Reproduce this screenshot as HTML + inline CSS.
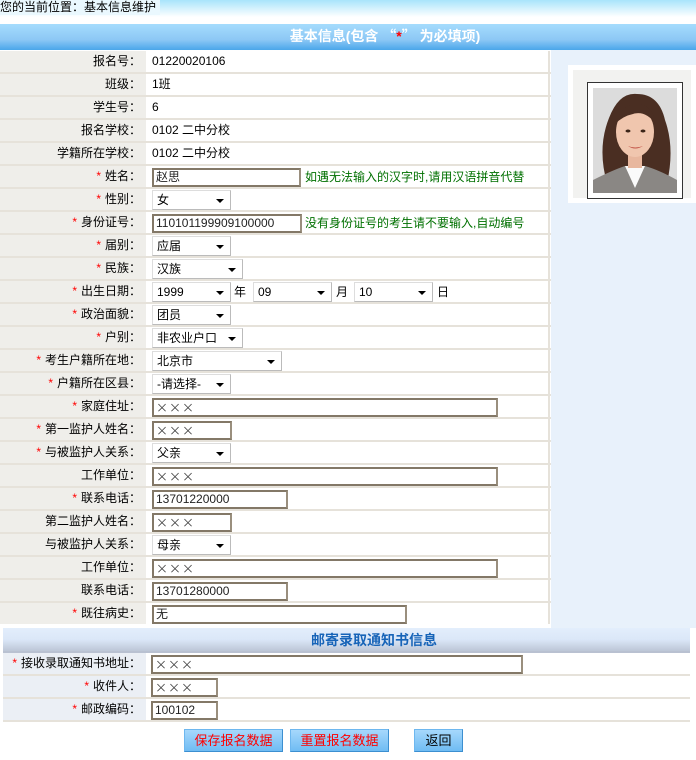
<!DOCTYPE html>
<html><head><meta charset="utf-8"><style>
*{margin:0;padding:0;box-sizing:border-box}
body{width:696px;height:760px;background:#fff;font-family:"Liberation Sans","Noto Sans CJK SC","WenQuanYi Zen Hei",sans-serif;font-size:12px;color:#000;position:relative;overflow:hidden}
.top{position:absolute;left:0;top:0;width:696px;height:17px;background:linear-gradient(#a8e4fb,#ffffff)}
.top span{position:absolute;left:0;top:0;height:15px;width:160px;background:#eaf8fe;line-height:14px;font-size:12px}
.h1{position:absolute;left:0;top:24px;width:696px;height:26px;background:linear-gradient(#a5dcfd,#8dc8f5 60%,#4aa6ea);color:#fff;font-weight:bold;font-size:14px;line-height:24px;text-align:center;padding-left:74px}
.h1 b{color:#f00}
.q{font-family:"Noto Sans CJK SC",sans-serif}
.right{position:absolute;left:551px;top:50px;width:145px;height:578px;background:#e8f1fb}
.photo{position:absolute;left:568px;top:65px;width:128px;height:138px;background:#fff;padding:5px}
.photo div.in{width:100%;height:100%;background:#f2f2f0;position:relative}
.frame{position:absolute;left:14px;top:12px;width:96px;height:117px;border:1px solid #333;background:#fff}
.pic{position:absolute;left:5px;top:5px;width:84px;height:105px;background:#e0e0e0;overflow:hidden}
.row{position:absolute;left:0;width:551px;height:23px;border-bottom:2px solid #e6e2da}
.lab{position:absolute;left:0;top:0;width:146px;height:21px;background:#efeeea;text-align:right;padding-right:5px;line-height:21px}
.val{position:absolute;left:147px;top:0;width:403px;height:21px;background:#fff;border-right:2px solid #e6e2da;line-height:21px;padding-left:5px}
.s{color:#f00;margin-right:4px}
.inp{position:absolute;top:2px;height:19px;border:2px solid #837867;border-right-color:#9a8f7e;background:#fff;line-height:15px;padding-left:2px;color:#222;font-size:12px}
.x{font-family:"Noto Sans CJK SC",sans-serif;color:#444;letter-spacing:1px}
.sel{position:absolute;top:1px;height:20px;background:#fff;border:1px solid #ddd;border-right-color:#bbb;border-bottom-color:#bbb;line-height:18px;padding-left:4px}
.sel:after{content:"";position:absolute;right:6px;top:8px;border-left:4px solid transparent;border-right:4px solid transparent;border-top:4px solid #000}
.t{position:absolute;top:0;line-height:23px}
.g{color:#007000}
.h2{position:absolute;left:3px;top:628px;width:687px;height:25px;background:linear-gradient(#e3eefc,#dbe7f8 50%,#bcc6d6);border-bottom:2px solid #b9c1d1;color:#1764b8;font-weight:bold;font-size:14px;text-align:center;line-height:24px;padding-left:55px}
.row2{position:absolute;left:3px;width:687px;height:23px;border-bottom:2px solid #e6e2da}
.row2 .lab{width:143px;background:#ebeff5}
.row2 .val{left:144px;width:543px;border-right:none}
.btn{position:absolute;top:729px;height:23px;background:linear-gradient(#a6d8fc,#6fbcf3);border:1px solid #6db7ef;border-right-color:#3c8fd0;border-bottom-color:#3c8fd0;color:#f00;text-align:center;line-height:21px;font-size:13px}
</style></head><body>
<div class="top"><span>您的当前位置：基本信息维护</span></div>
<div class="h1">基本信息(包含 <span class="q">“</span><b>*</b><span class="q">”</span> 为必填项)</div>
<div class="right"></div>
<div class="photo"><div class="in"><div class="frame"><div class="pic">
<svg width="84" height="105" viewBox="0 0 84 105"><rect width="84" height="105" fill="#dcdcdc"/>
<path d="M14 95 Q4 60 16 30 Q26 4 44 6 Q66 6 72 32 Q82 60 74 95Z" fill="#4a2e22"/>
<path d="M0 105 L0 92 Q20 82 32 78 L52 78 Q66 82 84 92 L84 105Z" fill="#8a8784"/>
<path d="M32 78 L42 100 L52 78Z" fill="#fafafa"/>
<rect x="35" y="62" width="14" height="18" fill="#e8b79e"/>
<ellipse cx="42" cy="44" rx="19" ry="25" fill="#f0c6ae"/>
<path d="M22 36 Q30 14 46 16 Q60 18 63 36 Q52 22 40 26 Q30 28 22 36Z" fill="#4a2e22"/>
<ellipse cx="35" cy="43" rx="2.5" ry="1.5" fill="#3a2418"/><ellipse cx="50" cy="43" rx="2.5" ry="1.5" fill="#3a2418"/>
<path d="M35 58 Q42 63 50 58 Q42 61 35 58Z" fill="#c4574a"/></svg>
</div></div></div></div>

<div class="row" style="top:51px"><div class="lab">报名号：</div><div class="val">01220020106</div></div>
<div class="row" style="top:74px"><div class="lab">班级：</div><div class="val">1班</div></div>
<div class="row" style="top:97px"><div class="lab">学生号：</div><div class="val">6</div></div>
<div class="row" style="top:120px"><div class="lab">报名学校：</div><div class="val">0102 二中分校</div></div>
<div class="row" style="top:143px"><div class="lab">学籍所在学校：</div><div class="val">0102 二中分校</div></div>
<div class="row" style="top:166px"><div class="lab"><span class="s">*</span>姓名：</div><div class="val"><div class="inp" style="left:5px;width:149px">赵思</div><span class="t g" style="left:158px">如遇无法输入的汉字时,请用汉语拼音代替</span></div></div>
<div class="row" style="top:189px"><div class="lab"><span class="s">*</span>性别：</div><div class="val"><div class="sel" style="left:5px;width:79px">女</div></div></div>
<div class="row" style="top:212px"><div class="lab"><span class="s">*</span>身份证号：</div><div class="val"><div class="inp" style="left:5px;width:150px">110101199909100000</div><span class="t g" style="left:158px">没有身份证号的考生请不要输入,自动编号</span></div></div>
<div class="row" style="top:235px"><div class="lab"><span class="s">*</span>届别：</div><div class="val"><div class="sel" style="left:5px;width:79px">应届</div></div></div>
<div class="row" style="top:258px"><div class="lab"><span class="s">*</span>民族：</div><div class="val"><div class="sel" style="left:5px;width:91px">汉族</div></div></div>
<div class="row" style="top:281px"><div class="lab"><span class="s">*</span>出生日期：</div><div class="val"><div class="sel" style="left:5px;width:79px">1999</div><span class="t" style="left:87px">年</span><div class="sel" style="left:106px;width:79px">09</div><span class="t" style="left:189px">月</span><div class="sel" style="left:207px;width:79px">10</div><span class="t" style="left:290px">日</span></div></div>
<div class="row" style="top:304px"><div class="lab"><span class="s">*</span>政治面貌：</div><div class="val"><div class="sel" style="left:5px;width:79px">团员</div></div></div>
<div class="row" style="top:327px"><div class="lab"><span class="s">*</span>户别：</div><div class="val"><div class="sel" style="left:5px;width:91px">非农业户口</div></div></div>
<div class="row" style="top:350px"><div class="lab"><span class="s">*</span>考生户籍所在地：</div><div class="val"><div class="sel" style="left:5px;width:130px">北京市</div></div></div>
<div class="row" style="top:373px"><div class="lab"><span class="s">*</span>户籍所在区县：</div><div class="val"><div class="sel" style="left:5px;width:79px">-请选择-</div></div></div>
<div class="row" style="top:396px"><div class="lab"><span class="s">*</span>家庭住址：</div><div class="val"><div class="inp x" style="left:5px;width:346px">×××</div></div></div>
<div class="row" style="top:419px"><div class="lab"><span class="s">*</span>第一监护人姓名：</div><div class="val"><div class="inp x" style="left:5px;width:80px">×××</div></div></div>
<div class="row" style="top:442px"><div class="lab"><span class="s">*</span>与被监护人关系：</div><div class="val"><div class="sel" style="left:5px;width:79px">父亲</div></div></div>
<div class="row" style="top:465px"><div class="lab">工作单位：</div><div class="val"><div class="inp x" style="left:5px;width:346px">×××</div></div></div>
<div class="row" style="top:488px"><div class="lab"><span class="s">*</span>联系电话：</div><div class="val"><div class="inp" style="left:5px;width:136px">13701220000</div></div></div>
<div class="row" style="top:511px"><div class="lab">第二监护人姓名：</div><div class="val"><div class="inp x" style="left:5px;width:80px">×××</div></div></div>
<div class="row" style="top:534px"><div class="lab">与被监护人关系：</div><div class="val"><div class="sel" style="left:5px;width:79px">母亲</div></div></div>
<div class="row" style="top:557px"><div class="lab">工作单位：</div><div class="val"><div class="inp x" style="left:5px;width:346px">×××</div></div></div>
<div class="row" style="top:580px"><div class="lab">联系电话：</div><div class="val"><div class="inp" style="left:5px;width:136px">13701280000</div></div></div>
<div class="row" style="top:603px;border-bottom:none"><div class="lab"><span class="s">*</span>既往病史：</div><div class="val"><div class="inp" style="left:5px;width:255px">无</div></div></div>

<div class="h2">邮寄录取通知书信息</div>
<div class="row2" style="top:653px"><div class="lab"><span class="s">*</span>接收录取通知书地址：</div><div class="val"><div class="inp x" style="left:4px;width:372px">×××</div></div></div>
<div class="row2" style="top:676px"><div class="lab"><span class="s">*</span>收件人：</div><div class="val"><div class="inp x" style="left:4px;width:67px">×××</div></div></div>
<div class="row2" style="top:699px"><div class="lab"><span class="s">*</span>邮政编码：</div><div class="val"><div class="inp" style="left:4px;width:67px">100102</div></div></div>

<div class="btn" style="left:184px;width:99px">保存报名数据</div>
<div class="btn" style="left:290px;width:99px">重置报名数据</div>
<div class="btn" style="left:414px;width:49px;color:#000">返回</div>
</body></html>
